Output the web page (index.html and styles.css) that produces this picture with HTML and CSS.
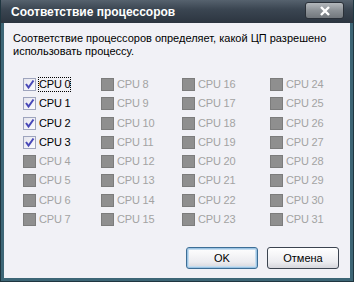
FILE: index.html
```html
<!DOCTYPE html>
<html lang="ru">

<head>
    <meta charset="UTF-8">
    <title>Соответствие процессоров</title>
    <link rel="stylesheet" href="styles.css">
</head>

<body>
    <div class="window">
        <div class="titlebar">
            <span class="title">Соответствие процессоров</span>
            <button class="close">
                <svg width="12" height="10" viewBox="0 0 12 10">
                    <path d="M2 1 L10 9 M10 1 L2 9" stroke="#fff" stroke-width="2.4" />
                </svg>
            </button>
        </div>
        <div class="content">
            <p class="desc">Соответствие процессоров определяет, какой ЦП разрешено использовать процессу.</p>
            <div class="grid" id="grid"></div>
            <div class="buttons">
                <button class="btn default">OK</button>
                <button class="btn">Отмена</button>
            </div>
        </div>
    </div>
    <script>
        const grid = document.querySelector('#grid')
        for (let i = 0; i < 32; i++) {
            const on = i < 4
            const item = document.createElement('label')
            item.className = on ? 'cpu' : 'cpu off'
            item.innerHTML = `<i class="box">${on ? '<svg width="11" height="11" viewBox="0 0 11 11"><path d="M2 5 L4.5 8.5 L9.5 1.5" fill="none" stroke="#4848b8" stroke-width="2"/></svg>' : ''}</i><span class="${i === 0 ? 'name focus' : 'name'}">CPU ${i}</span>`
            grid.appendChild(item)
        }
    </script>
</body>

</html>
```

FILE: styles.css
```css
body {
    margin: 0;
    font-family: "Liberation Sans", Arial, sans-serif;
}

.window {
    width: 354px;
    height: 282px;
    box-sizing: border-box;
    background: #3d6676;
    border: 1px solid #1f3640;
    border-top: none;
    padding: 0 3px 3px;
    display: flex;
    flex-direction: column;
}

.titlebar {
    height: 23px;
    margin: 0 -3px;
    background: linear-gradient(#56626e, #3b4652 40%, #2c3540);
    display: flex;
    align-items: center;
    justify-content: space-between;
    padding: 0 9px 0 10px;
    box-sizing: border-box;
}

.title {
    color: #fff;
    font-weight: bold;
    font-size: 12px;
}

.close {
    width: 39px;
    height: 17px;
    margin-top: -2px;
    border: 1px solid #2a3038;
    border-radius: 3px;
    background: linear-gradient(#b4b8bc, #8c9196 50%, #72777d);
    display: flex;
    align-items: center;
    justify-content: center;
    padding: 0;
}

.content {
    flex: 1;
    background: #f1f1f6;
    padding: 0 0 0 19px;
    display: flex;
    flex-direction: column;
}

.desc {
    margin: 9px 0 0 -10px;
    width: 330px;
    font-size: 11px;
    line-height: 13px;
    color: #000;
}

.grid {
    margin-top: 20px;
    display: grid;
    grid-auto-flow: column;
    grid-template-columns: 78px 81px 88px auto;
    grid-template-rows: 19px 20px 19px 19px 19px 20px 19px 19px;
}

.cpu {
    display: flex;
    align-items: flex-start;
    font-size: 11px;
    color: #000;
}

.cpu .box {
    width: 11px;
    height: 11px;
    border: 1px solid #9ea4bd;
    background: linear-gradient(135deg, #e6e6ee, #fbfbfd);
    margin-right: 2px;
    display: flex;
}

.cpu.off {
    color: #a3a3a3;
}

.cpu.off .box {
    background: #8f8f8f;
    border-color: #7c7c7c;
}

.name {
    line-height: 13px;
    padding: 0;
    border: 1px dotted transparent;
    margin-top: -1px;
    letter-spacing: -0.2px;
}

.name.focus {
    border-color: #000;
}

.buttons {
    margin-top: auto;
    display: flex;
    justify-content: flex-end;
    gap: 9px;
    padding: 0 11px 9px 0;
}

.btn {
    width: 72px;
    height: 22px;
    font-family: "Liberation Sans", Arial, sans-serif;
    font-size: 11px;
    color: #000;
    border: 1px solid #3c4450;
    border-radius: 3px;
    background: linear-gradient(#ffffff, #ececf0 70%, #d6d6dc);
    padding: 0;
}

.btn.default {
    border-color: #3d6e96;
    box-shadow: inset 0 0 0 1px #9cc4e4, inset 0 0 0 2px #c6ddef;
}
```
